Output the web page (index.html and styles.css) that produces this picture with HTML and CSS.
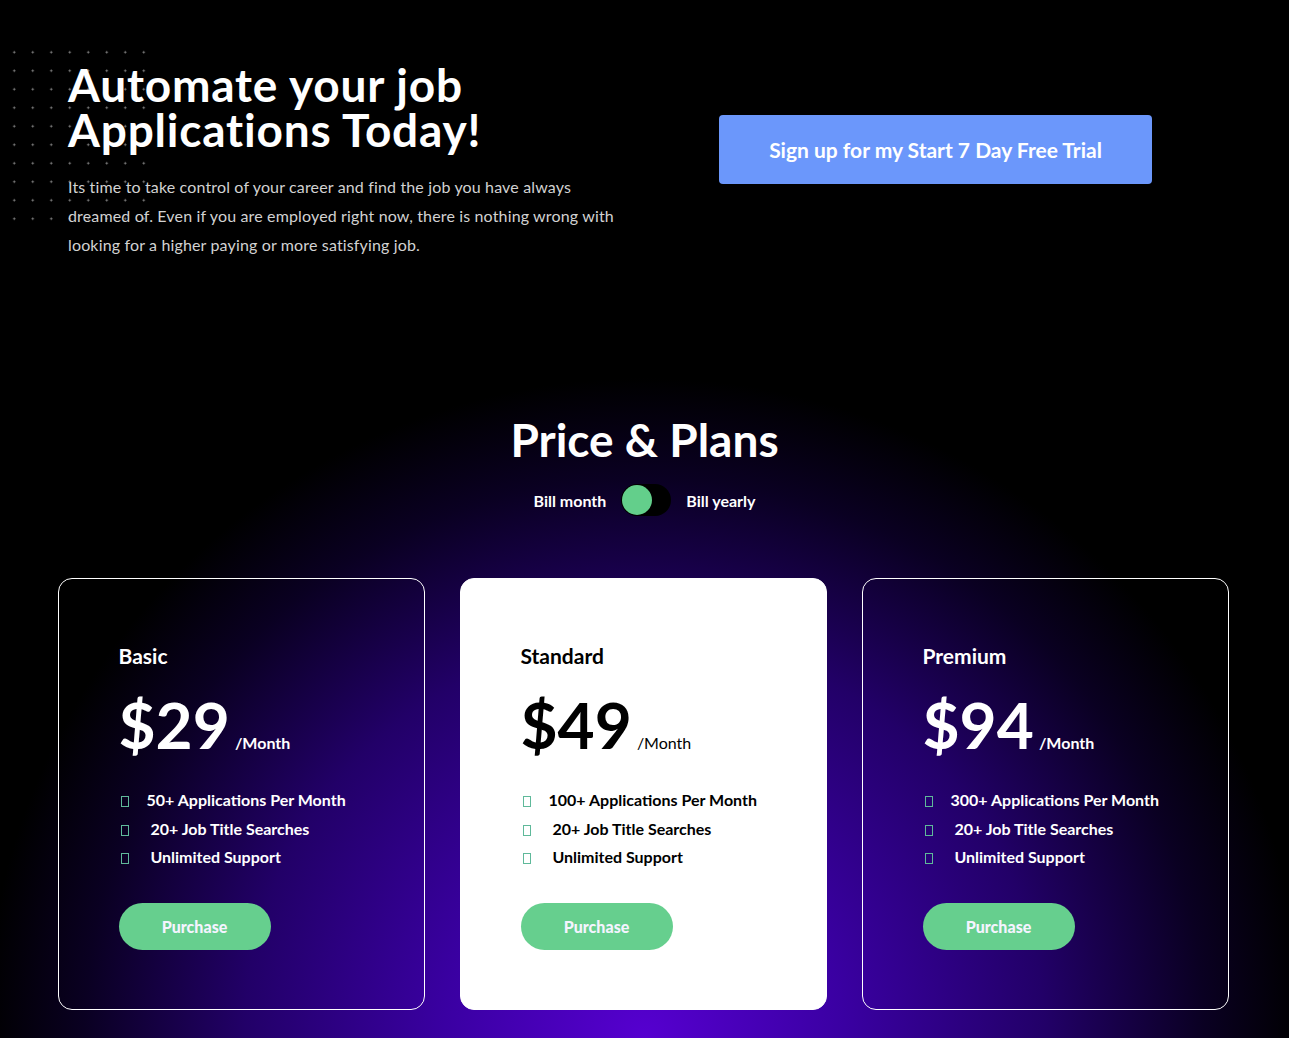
FILE: index.html
```html
<!DOCTYPE html>
<html lang="en">
<head>
    <meta charset="UTF-8">
    <title>Price &amp; Plans</title>
    <link rel="stylesheet" href="styles.css">
</head>
<body>
    <section class="hero">
        <div class="dots"></div>
        <div class="heroText">
            <h1>Automate your job<br>Applications Today!</h1>
            <p>Its time to take control of your career and find the job you have always dreamed of. Even if you are employed right now, there is nothing wrong with looking for a higher paying or more satisfying job.</p>
        </div>
        <a href="#" class="trialBtn">Sign up for my Start 7 Day Free Trial</a>
    </section>

    <section class="pricing">
        <h2>Price &amp; Plans</h2>
        <div class="billing">
            <span>Bill month</span>
            <span class="switch"><span class="knob"></span></span>
            <span>Bill yearly</span>
        </div>
        <div class="plans">
            <div class="card">
                <h3>Basic</h3>
                <div class="price"><span class="amount">$29</span><span class="per">/Month</span></div>
                <ul>
                    <li><i class="box"></i>50+ Applications Per Month</li>
                    <li><i class="box"></i>&nbsp;20+ Job Title Searches</li>
                    <li><i class="box"></i>&nbsp;Unlimited Support</li>
                </ul>
                <a href="#" class="buy">Purchase</a>
            </div>
            <div class="card light">
                <h3>Standard</h3>
                <div class="price"><span class="amount">$49</span><span class="per">/Month</span></div>
                <ul>
                    <li><i class="box"></i>100+ Applications Per Month</li>
                    <li><i class="box"></i>&nbsp;20+ Job Title Searches</li>
                    <li><i class="box"></i>&nbsp;Unlimited Support</li>
                </ul>
                <a href="#" class="buy">Purchase</a>
            </div>
            <div class="card">
                <h3>Premium</h3>
                <div class="price"><span class="amount">$94</span><span class="per">/Month</span></div>
                <ul>
                    <li><i class="box"></i>300+ Applications Per Month</li>
                    <li><i class="box"></i>&nbsp;20+ Job Title Searches</li>
                    <li><i class="box"></i>&nbsp;Unlimited Support</li>
                </ul>
                <a href="#" class="buy">Purchase</a>
            </div>
        </div>
    </section>
</body>
</html>
```

FILE: styles.css
```css
*{
    margin: 0;
    padding: 0;
    box-sizing: border-box;
}
body{
    background: #000;
    color: #fff;
    font-family: "Lato", "Liberation Sans", sans-serif;
    overflow: hidden;
}
a{
    text-decoration: none;
}
.hero{
    position: relative;
    display: flex;
    align-items: flex-start;
    padding: 62px 68px 0;
    height: 360px;
}
.dots{
    position: absolute;
    left: 5px;
    top: 43px;
    width: 148px;
    height: 185px;
    background-image: radial-gradient(circle, #8a8a8a 0.8px, transparent 1.3px);
    background-size: 18.5px 18.5px;
}
.heroText{
    position: relative;
    width: 651px;
}
.hero h1{
    font-size: 46px;
    line-height: 45px;
    font-weight: 700;
    letter-spacing: 0.8px;
}
.hero p{
    width: 560px;
    margin-top: 20px;
    font-size: 16px;
    line-height: 29px;
    letter-spacing: 0.15px;
    color: #d2d2d2;
}
.trialBtn{
    display: block;
    width: 433px;
    height: 69px;
    margin-top: 53px;
    line-height: 69px;
    text-align: center;
    background: #6b97fb;
    color: #fff;
    border-radius: 4px;
    font-size: 21px;
    font-weight: 700;
}
.pricing{
    height: 678px;
    padding-top: 52px;
    text-align: center;
    background: radial-gradient(circle at 50% 100%, #5600d0 0, #3a00a2 200px, #220068 400px, #0a0022 560px, #000 660px);
}
.pricing h2{
    font-size: 46px;
    line-height: 56px;
    font-weight: 700;
}
.billing{
    display: flex;
    justify-content: center;
    align-items: center;
    gap: 15px;
    margin-top: 16px;
    font-size: 16px;
    font-weight: 700;
}
.switch{
    width: 50px;
    height: 32px;
    border-radius: 16px;
    background: #000;
    padding: 1px;
}
.knob{
    display: block;
    width: 30px;
    height: 30px;
    border-radius: 50%;
    background: #63cf8b;
}
.plans{
    display: flex;
    justify-content: center;
    gap: 35px;
    margin-top: 62px;
    padding-right: 3px;
    text-align: left;
}
.card{
    width: 367px;
    height: 432px;
    padding: 64px 60px 0 60px;
    border: 1px solid #fff;
    border-radius: 14px;
}
.card.light{
    background: #fff;
    color: #000;
}
.card h3{
    font-size: 21px;
    line-height: 26px;
    font-weight: 700;
}
.price{
    margin-top: 22px;
}
.amount{
    font-size: 64px;
    line-height: 68px;
    font-weight: 700;
}
.per{
    margin-left: 5px;
    font-size: 16px;
    font-weight: 700;
}
.light .per, .light li{
    font-weight: 400;
}
.card ul{
    list-style: none;
    margin-top: 31px;
}
.card li{
    height: 28.5px;
    font-size: 16px;
    font-weight: 700;
}
.box{
    display: inline-block;
    width: 8px;
    height: 11px;
    margin: 0 18px 0 2px;
    border: 1px solid #5fb99a;
    vertical-align: -1px;
}
.buy{
    display: block;
    width: 152px;
    height: 47px;
    margin-top: 27px;
    line-height: 47px;
    text-align: center;
    border-radius: 24px;
    background: #66cf8e;
    color: #f4f4ff;
    font-size: 16px;
    font-weight: 900;
}
```
